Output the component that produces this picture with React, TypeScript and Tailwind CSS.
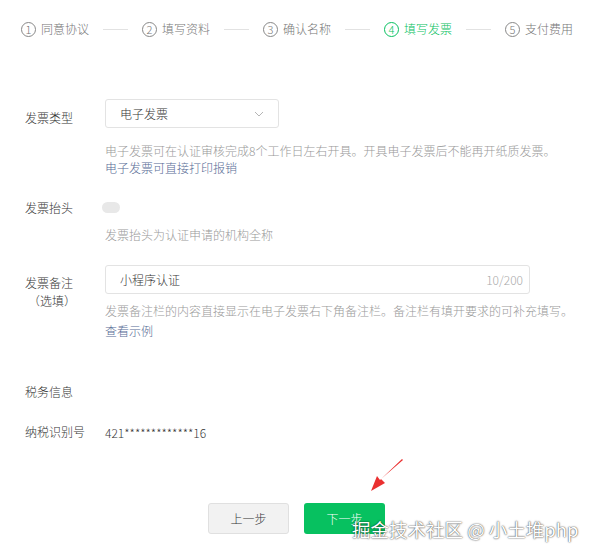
import React from 'react';

const steps = ['同意协议', '填写资料', '确认名称', '填写发票', '支付费用'];

const App: React.FC = () => {
  return (
    <div
      className="relative w-[599px] h-[555px] bg-white overflow-hidden text-[#353535] font-light"
      style={{ fontFamily: '"Noto Sans CJK SC", "Noto Sans", sans-serif' }}
    >
      {/* Steps */}
      <div className="flex items-center pl-[21px] pt-[21px] h-[37px]">
        {steps.map((s, i) => {
          const active = i === 3;
          return (
            <React.Fragment key={s}>
              <div className={`flex items-center gap-[5px] ${active ? 'text-[#07c160]' : 'text-[#777]'}`}>
                <span
                  className={`w-[15px] h-[15px] rounded-full border flex items-center justify-center text-[11px] leading-none ${
                    active ? 'border-[#07c160]' : 'border-[#888]'
                  }`}
                >
                  {i + 1}
                </span>
                <span className="text-[12px] leading-none">{s}</span>
              </div>
              {i < steps.length - 1 && <div className="w-[25px] h-px bg-[#e2e2e2] mx-[14px]" />}
            </React.Fragment>
          );
        })}
      </div>

      {/* Form */}
      <div className="pl-[25px] pt-[62px]">
        <div className="flex">
          <div className="w-[80px] text-[12px] pt-[10px]">发票类型</div>
          <div>
            <div className="w-[174px] h-[29px] border border-[#e3e3e3] rounded-[3px] flex items-center justify-between px-[14px] text-[12px]">
              <span>电子发票</span>
              <svg width="10" height="6" viewBox="0 0 10 6" fill="none">
                <path d="M1 1l4 4 4-4" stroke="#b5b5b5" strokeWidth="1" />
              </svg>
            </div>
            <div className="mt-[14px] text-[12px] leading-[17px] text-[#999]">
              电子发票可在认证审核完成8个工作日左右开具。开具电子发票后不能再开纸质发票。
            </div>
            <div className="text-[12px] leading-[17px] text-[#576b95]">电子发票可直接打印报销</div>
          </div>
        </div>

        <div className="flex mt-[23px]">
          <div className="w-[77px] text-[12px]">发票抬头</div>
          <div>
            <div className="w-[18px] h-[11px] rounded-full bg-[#e8e8e8] mt-[3px]" />
            <div className="mt-[13px] ml-[3px] text-[12px] leading-[17px] text-[#999]">发票抬头为认证申请的机构全称</div>
          </div>
        </div>

        <div className="flex mt-[22px]">
          <div className="w-[80px] text-[12px] pt-[9px] leading-[18px]">
            <div>发票备注</div>
            <div className="pl-[3px]">（选填）</div>
          </div>
          <div>
            <div className="w-[425px] h-[29px] border border-[#e3e3e3] rounded-[3px] flex items-center justify-between pl-[14px] pr-[6px] text-[12px]">
              <span>小程序认证</span>
              <span className="text-[#aaa]">10/200</span>
            </div>
            <div className="mt-[7px] text-[12px] leading-[20px] text-[#999]">
              发票备注栏的内容直接显示在电子发票右下角备注栏。备注栏有填开要求的可补充填写。
            </div>
            <div className="text-[12px] leading-[20px] text-[#576b95]">查看示例</div>
          </div>
        </div>

        <div className="mt-[42px] text-[12px]">税务信息</div>
        <div className="flex mt-[22px] text-[12px]">
          <div className="w-[80px]">纳税识别号</div>
          <div className="pt-[1px]">421*************16</div>
        </div>
      </div>

      {/* Buttons */}
      <div className="absolute left-0 right-0 top-[503px] flex justify-center gap-[15px] pr-[6px]">
        <button className="w-[81px] h-[31px] rounded-[3px] bg-[#f2f2f2] border border-[#e0e0e0] text-[12px] text-[#353535]">
          上一步
        </button>
        <button className="w-[81px] h-[31px] rounded-[3px] bg-[#07c160] text-[12px] text-white">下一步</button>
      </div>

      {/* Red arrow */}
      <svg className="absolute left-[365px] top-[455px]" width="45" height="40" viewBox="0 0 45 40">
        <path d="M38 5 L16 24 L20 28 L6 36 L12 21 L15 25 L37 4 Z" fill="#ea3030" />
      </svg>

      {/* Watermark */}
      <div
        className="absolute left-[352px] top-[516px] text-[18.5px] text-white whitespace-nowrap font-normal"
        style={{ textShadow: '0 0 2px rgba(0,0,0,0.6), 0 0 1px rgba(0,0,0,0.6)' }}
      >
        掘金技术社区 @ 小土堆php
      </div>
    </div>
  );
};

export default App;
